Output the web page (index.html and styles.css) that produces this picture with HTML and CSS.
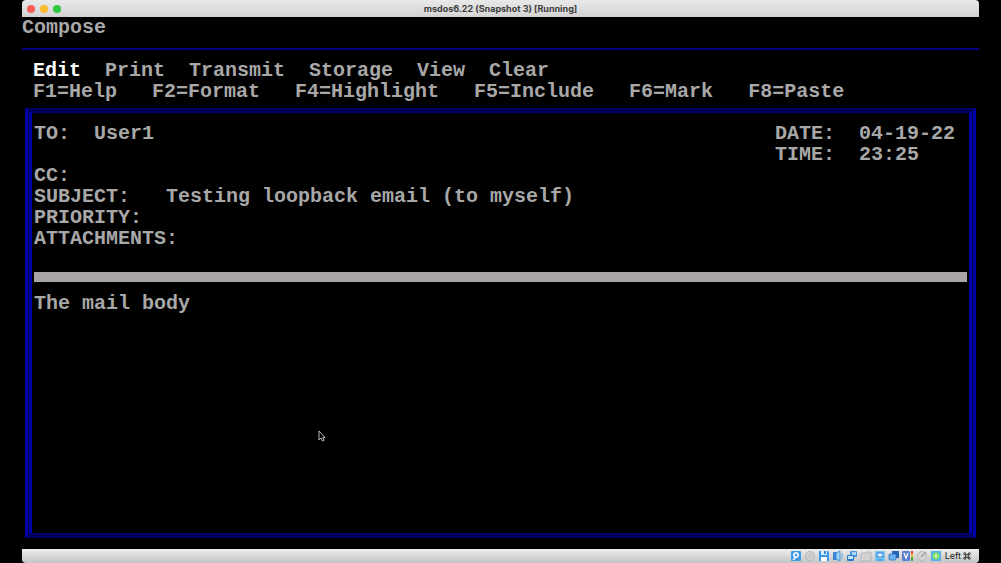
FILE: index.html
```
<!DOCTYPE html>
<html lang="en">
<head>
	<meta charset="utf-8">
	<title>msdos6.22 (Snapshot 3) [Running]</title>
	<link rel="stylesheet" href="styles.css">
</head>
<body>
	<div class="window">
		<div class="titlebar">
			<div class="lights">
				<button class="light close" aria-label="Close"></button>
				<button class="light minimize" aria-label="Minimize"></button>
				<button class="light zoom" aria-label="Zoom"></button>
			</div>
			<div class="title">msdos6.22 (Snapshot 3) [Running]</div>
		</div>

		<div class="screen">
			<h1 class="heading">Compose</h1>

			<div class="menu">
				<button class="active">Edit</button>
				<button>Print</button>
				<button>Transmit</button>
				<button>Storage</button>
				<button>View</button>
				<button>Clear</button>
			</div>
			<div class="menu keys">
				<button>F1=Help</button>
				<button>F2=Format</button>
				<button>F4=Highlight</button>
				<button>F5=Include</button>
				<button>F6=Mark</button>
				<button>F8=Paste</button>
			</div>

			<div class="frame">
				<form class="message">
					<div class="top-row">
						<div class="field">
							<label for="to">TO:</label>
							<input id="to" type="text" value="User1">
						</div>
						<div class="stamp">
							<div>DATE:</div><div>04-19-22</div>
							<div>TIME:</div><div>23:25</div>
						</div>
					</div>
					<div class="field">
						<label for="cc">CC:</label>
						<input id="cc" type="text">
					</div>
					<div class="field subject">
						<label for="subject">SUBJECT:</label>
						<input id="subject" type="text" value="Testing loopback email (to myself)">
					</div>
					<div class="field">
						<label for="priority">PRIORITY:</label>
						<input id="priority" type="text">
					</div>
					<div class="field">
						<label for="attachments">ATTACHMENTS:</label>
						<input id="attachments" type="text">
					</div>
					<div class="divider"></div>
					<textarea class="mail-body" aria-label="Mail body">The mail body</textarea>
				</form>
			</div>
		</div>

		<div class="statusbar">
			<!-- hard disk -->
			<svg viewBox="0 0 12 12"><rect x="1" y="1" width="10" height="10" rx="1" fill="#3f9ae6"/><circle cx="6" cy="5" r="3" fill="#e4f3ff"/><circle cx="6" cy="5" r="1.2" fill="#3f9ae6"/><path d="M3 10l3-3" stroke="#fff" stroke-width="1.4"/></svg>
			<!-- optical disk -->
			<svg viewBox="0 0 12 12"><circle cx="6" cy="6" r="4.5" fill="#d2d2d2" stroke="#b4b4b4"/><circle cx="6" cy="6" r="1.3" fill="#eee" stroke="#aaa" stroke-width=".7"/></svg>
			<!-- floppy -->
			<svg viewBox="0 0 12 12"><path d="M1 1h9l1 1v9H1z" fill="#3b9ae8"/><rect x="3" y="1" width="6" height="4" fill="#d9efff"/><rect x="6" y="1" width="2" height="3" fill="#3b86cf"/><rect x="3" y="7" width="6" height="4" fill="#fff"/></svg>
			<!-- audio -->
			<svg viewBox="0 0 12 12"><path d="M1 2h4v8H1z" fill="#3b86cf"/><path d="M4 3l4-2v10L4 9z" fill="#9bd4f8" stroke="#3b86cf" stroke-width=".8"/><path d="M10 3v6" stroke="#7db6e6" stroke-width="1.4"/></svg>
			<!-- network -->
			<svg viewBox="0 0 12 12"><rect x="4" y="1" width="7" height="6" rx="1" fill="#4a95dc"/><rect x="6" y="2" width="4" height="3" fill="#a9d8fb"/><rect x="1" y="5" width="7" height="6" rx="1" fill="#3079c4"/><rect x="2" y="6" width="5" height="3" fill="#c4e6ff"/></svg>
			<!-- shared folders -->
			<svg viewBox="0 0 12 12"><path d="M1 3h5l1-1h4v9H1z" fill="#d2d2d2" stroke="#b0b0b0" stroke-width=".8"/></svg>
			<!-- display -->
			<svg viewBox="0 0 12 12"><rect x="1" y="1" width="10" height="10" rx="1" fill="#7cc3f4"/><rect x="3" y="3" width="6" height="4" fill="#d9efff" stroke="#2f83d2"/><path d="M3 10h6" stroke="#2f83d2"/></svg>
			<!-- recording -->
			<svg viewBox="0 0 12 12"><rect x="4" y="1" width="7" height="7" fill="#2468bd"/><rect x="1" y="4" width="7" height="6" rx="1" fill="#6db5f0" stroke="#2d6fc0" stroke-width=".8"/></svg>
			<!-- features -->
			<svg viewBox="0 0 12 12"><rect x="0" y="1" width="8" height="10" rx="1" fill="#5c7fd0"/><path d="M2 3l2 5 2-5" fill="none" stroke="#fff" stroke-width="1.3"/><rect x="9" y="1" width="2" height="3" fill="#e44b33"/><rect x="9" y="4" width="2" height="3" fill="#f0bb2e"/><rect x="9" y="7" width="2" height="4" fill="#54a83d"/></svg>
			<!-- mouse -->
			<svg viewBox="0 0 12 12"><circle cx="6" cy="6" r="4.5" fill="#d6d6d6" stroke="#b8b8b8"/><path d="M5 7l5-5" stroke="#a5a5a5" stroke-width="1.5"/></svg>
			<!-- keyboard -->
			<svg viewBox="0 0 12 12"><rect x="1" y="1" width="10" height="10" rx="1" fill="#4fb0e8"/><circle cx="6" cy="6" r="3.5" fill="#8fe36b"/><path d="M6 4v3M5 6l1 1 1-1" fill="none" stroke="#f5fff0"/></svg>
			<span class="host-key">Left <svg viewBox="0 0 12 12"><path d="M4 4h4v4H4zM4 4H3a1.5 1.5 0 1 1 1-1zM8 4V3a1.5 1.5 0 1 1 1 1zM8 8h1a1.5 1.5 0 1 1-1 1zM4 8v1a1.5 1.5 0 1 1-1-1z" fill="none" stroke="#222" stroke-width="1.3"/></svg></span>
		</div>

		<svg class="pointer" viewBox="0 0 8 12"><path d="M1 1v9l2-2 1.5 3 1.5-.7L4.700 7.500H7z" fill="#000" stroke="#b8b8b8"/></svg>
	</div>
</body>
</html>
```
FILE: styles.css
```
* {
	margin: 0;
	padding: 0;
	box-sizing: border-box;
}
body {
	background-color: #000;
	padding: 0 22px;
}
button, input, textarea {
	font: inherit;
	color: inherit;
	background: none;
	border: none;
	outline: none;
}
.window {
	position: relative;
	display: flex;
	flex-direction: column;
	height: 100vh;
}

/* Title bar */
.titlebar {
	display: grid;
	grid-template-columns: 1fr auto 1fr;
	align-items: center;
	height: 17px;
	padding: 0 5px;
	background: linear-gradient(#e9e9e9, #d2d2d2);
	border-radius: 4px 4px 0 0;
}
.lights {
	display: flex;
	gap: 5px;
}
.light {
	width: 8px;
	height: 8px;
	border-radius: 50%;
}
.close {
	background-color: #f95e57;
}
.minimize {
	background-color: #fbbb2f;
}
.zoom {
	background-color: #2bc840;
}
.title {
	font: bold 9px/16px Inter, "Liberation Sans", sans-serif;
	color: #3c3c3c;
}

/* DOS screen */
.screen {
	flex: 1;
	display: flex;
	flex-direction: column;
	min-height: 0;
	padding-bottom: 11px;
	font: bold 20px/21px "Liberation Mono", monospace;
	color: #a8a8a8;
}
.heading {
	font: inherit;
	height: 33px;
	border-bottom: 2px solid #000080;
	margin-bottom: 10px;
}
.menu {
	display: flex;
	gap: 24px;
	padding-left: 11px;
}
.keys {
	gap: 35px;
	margin-bottom: 6px;
}
.active {
	color: #fff;
}

/* Double line frame */
.frame {
	flex: 1;
	display: flex;
	min-height: 0;
	margin: 0 3px;
	padding: 1px;
	background-color: #000048;
	border: solid #0000a8;
	border-width: 2px 3px;
	border-top-color: #000068;
	border-bottom-color: #000068;
}
.message {
	flex: 1;
	display: flex;
	flex-direction: column;
	padding: 10px 2px 0;
	background-color: #000;
	border: solid #0000a8;
	border-width: 2px 3px;
	border-top-color: #000068;
	border-bottom-color: #000068;
}
.top-row {
	display: flex;
	justify-content: space-between;
}
.field {
	display: flex;
	gap: 24px;
}
.field input {
	flex: 1;
	min-width: 0;
	height: 21px;
}
.subject {
	gap: 36px;
}
.stamp {
	display: grid;
	grid-template-columns: auto auto;
	column-gap: 24px;
	padding-right: 12px;
}
.divider {
	height: 10px;
	margin: 23px 0 11px;
	background-color: #a8a4a8;
}
.mail-body {
	flex: 1;
	resize: none;
}

/* Status bar */
.statusbar {
	display: flex;
	justify-content: flex-end;
	align-items: center;
	gap: 2px;
	height: 14px;
	padding-right: 8px;
	background: linear-gradient(#ececec, #c4c4c4);
	border-radius: 0 0 4px 4px;
}
.statusbar svg {
	width: 12px;
	height: 12px;
}
.host-key {
	display: flex;
	align-items: center;
	gap: 2px;
	margin-left: 1px;
	font: 9px/14px Inter, "Liberation Sans", sans-serif;
	color: #222;
}
.host-key svg {
	width: 8px;
	height: 8px;
}

.pointer {
	position: absolute;
	left: 296px;
	top: 430px;
	width: 8px;
	height: 12px;
}
```
